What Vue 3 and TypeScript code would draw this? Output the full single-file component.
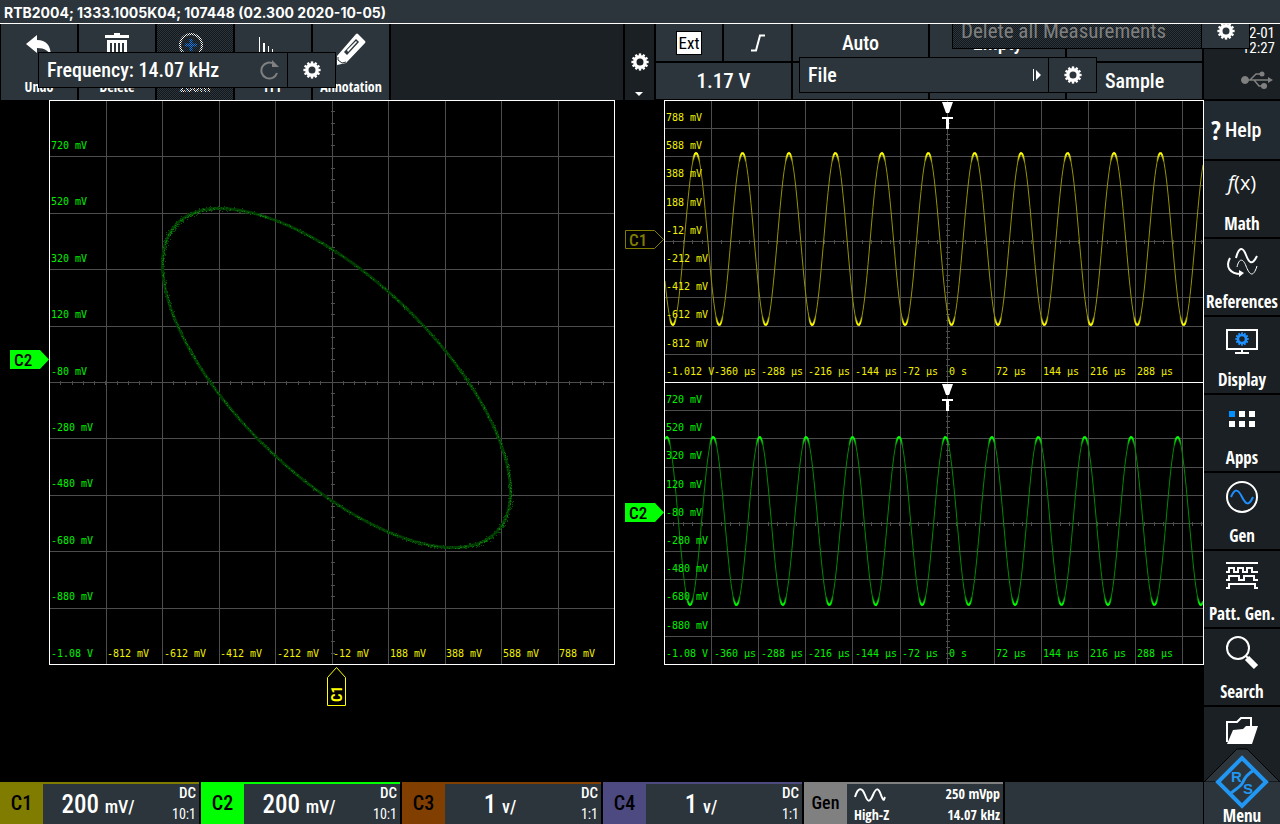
<script setup lang="ts">
interface Label { text: string; x: number; y: number }
interface Channel { id: string; value: string; unit: string; coupling: string; probe: string }

const channels: Channel[] = [
  { id: 'C1', value: '200', unit: 'mV/', coupling: 'DC', probe: '10:1' },
  { id: 'C2', value: '200', unit: 'mV/', coupling: 'DC', probe: '10:1' },
  { id: 'C3', value: '1', unit: 'v/', coupling: 'DC', probe: '1:1' },
  { id: 'C4', value: '1', unit: 'v/', coupling: 'DC', probe: '1:1' },
]

const tools = [
  { id: 'undo', label: 'Undo' },
  { id: 'trash', label: 'Delete' },
  { id: 'zoom', label: 'Zoom' },
  { id: 'fft', label: 'FFT' },
  { id: 'pencil', label: 'Annotation' },
]

const sideItems = [
  { id: 'math', label: 'Math' },
  { id: 'references', label: 'References' },
  { id: 'display', label: 'Display' },
  { id: 'apps', label: 'Apps' },
  { id: 'gen', label: 'Gen' },
  { id: 'pattern', label: 'Patt. Gen.' },
  { id: 'search', label: 'Search' },
]

const PERIOD = 46.44
const range = (n: number) => Array.from({ length: n }, (_, i) => i)

// Graticule lines of a plot, with fine ticks on both centre axes.
function gridPath(x0: number, y0: number, w: number, h: number, dx: number, dy: number, cx: number, cy: number) {
  let d = ''
  for (let x = x0 + dx; x < x0 + w - 4; x += dx) d += `M${Math.round(x)} ${y0}v${h}`
  for (let y = y0 + dy; y < y0 + h - 4; y += dy) d += `M${x0} ${Math.round(y)}h${w}`
  for (let x = x0 + dx / 5; x < x0 + w - 2; x += dx / 5) d += `M${Math.round(x)} ${cy - 2}v4`
  for (let y = y0 + dy / 5; y < y0 + h - 2; y += dy / 5) d += `M${cx - 2} ${Math.round(y)}h4`
  return d
}
const xyGrid = gridPath(49, 100, 565, 564, 56.5, 56.4, 332, 382)
const topGrid = gridPath(664, 100, 539, 282, 47.1, 28.2, 947, 241)
const lowGrid = gridPath(664, 382, 539, 282, 47.1, 28.2, 947, 523)

function wave(minimumX: number, mid: number, amp: number) {
  const pts: string[] = []
  for (let x = 665; x <= 1203; x += 1) {
    const y = mid + amp * Math.cos((2 * Math.PI * (x - minimumX)) / PERIOD)
    pts.push(`${x},${y.toFixed(1)}`)
  }
  return pts.join(' ')
}
const wave1 = wave(719.3, 239, 86)
const wave2 = wave(690, 521, 84)

const PHASE = Math.acos(0.67)
const orbit = (t: number, spread = 0): [number, number] => [
  336.5 + (174 + spread) * Math.cos(t),
  378 + (169.5 + spread) * Math.cos(t - PHASE),
]
const ellipse = range(361).map((i) => orbit((i * Math.PI) / 180).map((v) => v.toFixed(1)).join(',')).join(' ')

let seed = 7
const random = () => {
  seed = (seed * 16807) % 2147483647
  return seed / 2147483647
}
function speckle(count: number, spread: number) {
  return range(count).map(() => {
    const t = random() * Math.PI * 2
    const [x, y] = orbit(t, (random() + random() - 1) * spread)
    return `M${Math.round(x)} ${Math.round(y)}h1`
  }).join('')
}
const haze = speckle(1300, 3)
const sparks = speckle(350, 1)

const volts1 = ['788 mV', '588 mV', '388 mV', '188 mV', '-12 mV', '-212 mV', '-412 mV', '-612 mV', '-812 mV', '-1.012 V']
const volts2 = ['720 mV', '520 mV', '320 mV', '120 mV', '-80 mV', '-280 mV', '-480 mV', '-680 mV', '-880 mV', '-1.08 V']
const times = ['-360 µs', '-288 µs', '-216 µs', '-144 µs', '-72 µs', '0 s', '72 µs', '144 µs', '216 µs', '288 µs']
const column = (texts: string[], x: number, y: number, step: number): Label[] =>
  texts.map((text, i) => ({ text, x, y: Math.round(y + i * step) }))
const row = (texts: string[], x: number, y: number, step: number): Label[] =>
  texts.map((text, i) => ({ text, x: Math.round(x + i * step), y }))

const xyVolts = column(volts2, 51, 149, 56.4)
const xySweep = row([...volts1.slice(0, 9)].reverse(), 107, 657, 56.5)
const topVolts = column(volts1, 666, 121, 28.2)
const lowVolts = column(volts2, 666, 403, 28.2)
const topTimes = row(times, 714, 375, 47)
const lowTimes = row(times, 714, 657, 47)

const gearTeeth = range(12).map((i) => i * 30)
</script>

<template>
  <div class="device">
    <svg class="defs" aria-hidden="true">
      <symbol id="gear" viewBox="-9 -9 18 18">
        <circle r="5.2" fill="none" stroke="currentColor" stroke-width="3.4" />
        <rect v-for="a in gearTeeth" :key="a" x="-1.2" y="-8.6" width="2.4" height="3" fill="currentColor" :transform="`rotate(${a})`" />
      </symbol>
      <pattern id="dither" width="2" height="2" patternUnits="userSpaceOnUse">
        <path d="M0 0h1v1H0zM1 1h1v1H1z" fill="#12181b" shape-rendering="crispEdges" />
      </pattern>
    </svg>

    <header class="title">RTB2004; 1333.1005K04; 107448 (02.300 2020-10-05)</header>

    <div class="body">
      <main class="main">
        <div class="toolbar">
          <button v-for="t in tools" :key="t.id" class="tool">
            <svg v-if="t.id === 'undo'" viewBox="0 0 32 30" width="32" height="30"><path d="M3 11 14 2v5c9 0 14 5 14 17-2-6-6-9-14-9v5z" fill="#fff" /></svg>
            <svg v-else-if="t.id === 'trash'" viewBox="0 0 32 30" width="32" height="30"><path d="M4 2h9V0h6v2h9v3H4zM6 7h20v22H6z" fill="#fff" /><path d="M10 10v16M14 10v16M18 10v16M22 10v16" stroke="#2b353b" stroke-width="2" /></svg>
            <svg v-else-if="t.id === 'zoom'" viewBox="0 0 32 30" width="32" height="30"><circle cx="12" cy="12" r="11" fill="none" stroke="#fff" stroke-width="2" /><path d="M6 12h12M12 6v12" stroke="#0a84ff" stroke-width="3" /></svg>
            <svg v-else-if="t.id === 'fft'" viewBox="0 0 32 30" width="32" height="30"><path d="M2.500 4v24M6.500 10v18M7.500 10v18M11.500 13v15M15.500 16v12M19.500 20v8" stroke="#fff" stroke-width="1" /></svg>
            <svg v-else viewBox="0 0 32 32" width="32" height="32"><path d="M2 32V23L21 1q1-1 2 0l7 7q1 1 0 2L11 30z" fill="#fff" /><path d="M9 19 21 6l3 3-12 13z" fill="#2b353b" /><path d="M3 24v3l4 3 4-1" fill="none" stroke="#2b353b" stroke-width="1" /><path d="m12 17 9-9 1 1-9 10z" fill="#fff" /></svg>
            <span>{{ t.label }}</span>
            <svg v-if="t.id === 'zoom'" class="dither"><rect width="100%" height="100%" fill="url(#dither)" /></svg>
          </button>
          <div class="spare"></div>
          <button class="gearcol" aria-label="Toolbar settings">
            <svg width="18" height="18"><use href="#gear" /></svg>
            <svg class="caret" viewBox="0 0 8 4" width="8" height="4"><path d="M0 0h8L4 4z" fill="#fff" /></svg>
          </button>
          <div class="trigger">
            <button class="cell"><span class="ext">Ext</span></button>
            <button class="cell" aria-label="Rising edge"><svg viewBox="0 0 14 18" width="14" height="18"><path d="M0 16.500h5L9 1.500h5" fill="none" stroke="#fff" stroke-width="2" /></svg></button>
            <button class="cell">Auto</button>
            <button class="cell">Empty</button>
            <button class="cell"></button>
            <button class="cell wide">1.17 V</button>
            <button class="cell"></button>
            <button class="cell"></button>
            <button class="cell">Sample</button>
          </div>
        </div>

        <section class="plots">
          <svg class="xy" viewBox="0 100 615 607">
            <path :d="xyGrid" class="grid" />
            <polyline :points="ellipse" class="orbit" />
            <path :d="haze" class="haze" />
            <path :d="sparks" class="sparks" />
            <path d="M49.500 100.500h565v564h-565z" class="frame" />
            <text v-for="l in xyVolts" :key="l.text" :x="l.x" :y="l.y" class="scale green">{{ l.text }}</text>
            <text v-for="l in xySweep" :key="l.text" :x="l.x" :y="l.y" class="scale yellow">{{ l.text }}</text>
            <path d="M10 350h30l9 9.500-9 9.500H10z" fill="#00ff00" />
            <text x="14" y="366" class="tag" fill="#000">C2</text>
            <path d="M327.500 705.500v-28l9-10 9 10v28z" fill="none" stroke="#ffff00" />
            <text x="0" y="0" class="tag small" fill="#ffff00" transform="translate(342 702) rotate(-90)">C1</text>
          </svg>
          <svg class="yt" viewBox="615 100 589 607">
            <defs>
              <linearGradient id="yellowPeaks" gradientUnits="userSpaceOnUse" x1="0" x2="0" y1="152" y2="326">
                <stop offset="0" stop-color="#ff0" /><stop offset=".01" stop-color="#ff0" /><stop offset=".06" stop-color="#ff0" stop-opacity="0" />
                <stop offset=".94" stop-color="#ff0" stop-opacity="0" /><stop offset=".99" stop-color="#ff0" /><stop offset="1" stop-color="#ff0" />
              </linearGradient>
              <linearGradient id="greenPeaks" gradientUnits="userSpaceOnUse" x1="0" x2="0" y1="436" y2="606">
                <stop offset="0" stop-color="#0f0" /><stop offset=".01" stop-color="#0f0" /><stop offset=".06" stop-color="#0f0" stop-opacity="0" />
                <stop offset=".94" stop-color="#0f0" stop-opacity="0" /><stop offset=".99" stop-color="#0f0" /><stop offset="1" stop-color="#0f0" />
              </linearGradient>
            </defs>
            <path :d="topGrid" class="grid" />
            <path :d="lowGrid" class="grid" />
            <polyline :points="wave1" class="trace" stroke="#969200" />
            <polyline :points="wave1" class="peaks" stroke="url(#yellowPeaks)" />
            <polyline :points="wave2" class="trace" stroke="#008a00" />
            <polyline :points="wave2" class="peaks" stroke="url(#greenPeaks)" />
            <path d="M664.500 100.500h539v564h-539zM664 382.500h539" class="frame" />
            <text v-for="l in topVolts" :key="l.text" :x="l.x" :y="l.y" class="scale yellow">{{ l.text }}</text>
            <text v-for="l in topTimes" :key="l.text" :x="l.x" :y="l.y" class="scale yellow">{{ l.text }}</text>
            <text v-for="l in lowVolts" :key="l.text" :x="l.x" :y="l.y" class="scale green">{{ l.text }}</text>
            <text v-for="l in lowTimes" :key="l.text" :x="l.x" :y="l.y" class="scale green">{{ l.text }}</text>
            <g v-for="y in [102, 384]" :key="y" fill="#fff">
              <path :d="`M942 ${y}h11l-4 11h-3z`" />
              <path :d="`M942 ${y + 15}h11v2h-4v10h-3v-10h-4z`" />
            </g>
            <path d="M625.500 230.500h29l9 9-9 9h-29z" fill="none" stroke="#807c00" />
            <text x="629" y="246" class="tag" fill="#807c00">C1</text>
            <path d="M625 503h30l9 9.500-9 9.500h-30z" fill="#00ff00" />
            <text x="629" y="519" class="tag" fill="#000">C2</text>
          </svg>
        </section>

        <footer class="channels">
          <button v-for="c in channels" :key="c.id" class="channel" :class="c.id.toLowerCase()">
            <span class="name">{{ c.id }}</span>
            <span class="panel">
              <span class="value">{{ c.value }} <small>{{ c.unit }}</small></span>
              <span class="meta"><span>{{ c.coupling }}</span><span class="thin">{{ c.probe }}</span></span>
            </span>
          </button>
          <button class="channel generator">
            <span class="name">Gen</span>
            <span class="panel both">
              <span class="meta left">
                <svg viewBox="0 0 32 16" width="32" height="16"><path d="M1 10C4 0 8 0 11 8s5 7 8 0 5-8 8 0 3 4 4 2" fill="none" stroke="#fff" stroke-width="2" /></svg>
                <span>High-Z</span>
              </span>
              <span class="meta"><span>250 mVpp</span><span>14.07 kHz</span></span>
            </span>
          </button>
          <div class="rest"></div>
        </footer>
      </main>

      <aside class="side">
        <div class="status">
          <span>2020-12-01</span>
          <span>12:27</span>
          <svg viewBox="0 0 32 20" width="32" height="20"><g fill="#808080" stroke="#808080"><circle cx="4" cy="10" r="3.500" /><path d="M4 10h24M9 10l6-6h5M13 10l5 6h4" fill="none" stroke-width="1.500" /><circle cx="21" cy="4" r="2.500" stroke="none" /><circle cx="23" cy="16" r="3" stroke="none" /><path d="m27 7 5 3-5 3z" stroke="none" /></g></svg>
        </div>
        <button class="help"><b>?</b>Help</button>
        <button v-for="s in sideItems" :key="s.id" class="item">
          <span v-if="s.id === 'math'" class="fx"><i>f</i>(x)</span>
          <svg v-else viewBox="0 0 34 34" width="34" height="34" fill="none" stroke="#fff" stroke-width="2">
            <template v-if="s.id === 'references'">
              <path d="M11 12C14 0 18 1 21 9s6 11 11 1" /><path d="M12 21c2-9 6-9 9-1s7 13 11 0" stroke-width="1" /><path d="M5 12c-5 9 0 16 11 16" /><path d="m14 24 5 3-5 4z" fill="#fff" stroke="none" />
            </template>
            <template v-else-if="s.id === 'display'">
              <path d="M2 6h30v19H2zM10 29h14M17 25v4" /><svg x="10" y="8" width="14" height="14" color="#1e90ff" stroke="none"><use href="#gear" /></svg>
            </template>
            <template v-else-if="s.id === 'apps'">
              <g stroke="none" fill="#fff"><path d="M4 9h6v6H4z" fill="#0090ff" /><path d="M14 9h6v6h-6zM24 9h6v6h-6zM4 19h6v6H4zM14 19h6v6h-6zM24 19h6v6h-6z" /></g>
            </template>
            <template v-else-if="s.id === 'gen'">
              <circle cx="17" cy="17" r="15" /><path d="M6 17C10 8 13 9 17 17s7 9 11 0" stroke="#1e90ff" />
            </template>
            <template v-else-if="s.id === 'pattern'">
              <path d="M1 5h32M1 14h3v-4h5v4h4v-4h5v4h4v-4h5v4h6M1 22h3v-4h10v4h5v-4h10v4h4M1 30h3v-4h26v4h3" />
            </template>
            <template v-else>
              <circle cx="13" cy="12" r="11" /><path d="m21 20 3 3" /><path d="m22 22 9 9" stroke-width="6" />
            </template>
          </svg>
          <span>{{ s.label }}</span>
        </button>
        <button class="item file" aria-label="File">
          <svg viewBox="0 0 34 30" width="34" height="30"><path d="M2 26V6h10l4-4h10v8" fill="none" stroke="#fff" stroke-width="2" /><path d="M2 28 8 14l10-1 3-3h12l-6 18z" fill="#fff" /></svg>
        </button>
        <button class="menu">
          <svg class="roof" viewBox="0 0 76 34" preserveAspectRatio="none"><path d="M0 34 33 1h10l33 33z" fill="#2b353b" stroke="#000" /></svg>
          <svg class="logo" viewBox="-27 -27 54 54" width="54" height="54">
            <path d="M0-24 24 0 0 24-24 0z" fill="#2b353b" stroke="#2196f3" stroke-width="4" />
            <path d="M12-12C5-7 3-5 1 0S-7 7-12 12" fill="none" stroke="#2196f3" stroke-width="3" />
            <text x="-11" y="0" class="rs">R</text><text x="1" y="12" class="rs">S</text>
          </svg>
          <span>Menu</span>
        </button>
      </aside>

      <div class="popup frequency">
        <button class="action">Frequency: 14.07 kHz
          <svg viewBox="0 0 20 20" width="20" height="20"><path d="M17 13A8 8 0 1 1 14 4" fill="none" stroke="#808080" stroke-width="2" /><path d="M12 0v7h7z" fill="#808080" /></svg>
        </button>
        <button class="gearbtn" aria-label="Frequency settings"><svg width="18" height="18"><use href="#gear" /></svg></button>
      </div>
      <div class="popup files">
        <button class="action">File
          <svg viewBox="0 0 8 12" width="8" height="12"><path d="M0 0h1v12H0zM3 1l5 5-5 5z" fill="#fff" /></svg>
        </button>
        <button class="gearbtn" aria-label="File settings"><svg width="18" height="18"><use href="#gear" /></svg></button>
      </div>
      <div class="popup measurements">
        <button class="action" disabled>
          <svg class="dither"><rect width="100%" height="100%" fill="url(#dither)" /></svg>
          <span>Delete all Measurements</span>
        </button>
        <button class="gearbtn" aria-label="Measurement settings"><svg width="18" height="18"><use href="#gear" /></svg></button>
      </div>
    </div>
  </div>
</template>

<style>
body { margin: 0; background: #000; }
</style>

<style scoped>
.device {
  min-height: 100vh;
  display: flex;
  flex-direction: column;
  background: #000;
  color: #fff;
  font-family: "Roboto Condensed", "Liberation Sans Narrow", "Liberation Sans", sans-serif;
  font-size: 20px;
  font-weight: 500;
  line-height: 20px;
}
.defs { position: absolute; width: 0; height: 0; }
button {
  margin: 0; padding: 0; border: 0; color: inherit; font: inherit; background: #2b353b;
}
.title {
  box-sizing: border-box;
  height: 24px;
  padding: 3px 4px 0;
  border-bottom: 1px solid #fff;
  background: #2b353b;
  font: bold 14px/20px Inter, "Liberation Sans", sans-serif;
}
.body { position: relative; flex: 1; display: flex; overflow: hidden; }
.main { flex: 1; min-width: 0; display: flex; flex-direction: column; }

.toolbar { display: flex; height: 76px; padding-left: 1px; box-sizing: border-box; }
.tool, .item, .menu, .generator .meta, .help b {
  font-family: "Open Sans Condensed", "Roboto Condensed", "Liberation Sans", sans-serif;
  font-weight: bold;
}
.tool {
  position: relative;
  box-sizing: border-box; width: 78px; border-right: 2px solid #000;
  display: flex; flex-direction: column; align-items: center; justify-content: space-between;
  padding: 9px 0 3px; font-size: 14px; white-space: nowrap;
}
.dither { position: absolute; left: 0; top: 0; width: 100%; height: 100%; }
.spare { flex: 1; background: #1a2023; }
.gearcol {
  position: relative; box-sizing: border-box; width: 33px; border: solid #000; border-width: 0 2px;
  background: #1a2023; display: flex; align-items: center; justify-content: center;
}
.caret { position: absolute; bottom: 4px; left: 10px; }
.trigger {
  width: 548px; display: grid; grid-template-columns: 66fr 67fr 135fr 135fr 135fr;
  grid-template-rows: 37px 36px; gap: 2px; padding: 0 2px 1px 0; box-sizing: border-box;
}
.cell { display: flex; align-items: center; justify-content: center; min-width: 0; }
.wide { grid-column: span 2; font-size: 21px; }
.ext { background: #fff; color: #000; border: 1px solid #000; font-size: 17px; line-height: 22px; padding: 0 2px; font-weight: 400; }

.plots { display: flex; align-items: flex-start; }
.xy { flex: 615 1 0; min-width: 0; display: block; }
.yt { flex: 589 1 0; min-width: 0; display: block; }
.grid { fill: none; stroke: #4d4d4d; transform: translate(0.5px, 0.5px); shape-rendering: crispEdges; }
.frame { fill: none; stroke: #fff; shape-rendering: crispEdges; }
.trace { fill: none; stroke-width: 1; }
.peaks { fill: none; stroke-width: 2; }
.orbit { fill: none; stroke: #003600; stroke-width: 3; }
.haze { stroke: #005200; shape-rendering: crispEdges; }
.sparks { stroke: #0f780f; shape-rendering: crispEdges; }
.scale { font: 10px "DejaVu Sans Mono", monospace; }
.green { fill: #00f000; }
.yellow { fill: #f0f000; }
.tag { font-size: 17px; }
.small { font-size: 15px; font-weight: bold; }

.channels {
  margin-top: auto; display: grid; grid-template-columns: repeat(5, 199fr) 198fr; gap: 2px;
  height: 42px; padding-right: 1px;
}
.channel { display: flex; align-items: stretch; border-top: 2px solid var(--c); background: var(--c); min-width: 0; text-align: left; }
.c1 { --c: #807c00; }
.c2 { --c: #00ff00; }
.c3 { --c: #803f00; }
.c4 { --c: #4c4a80; }
.generator { --c: #808080; }
.name { width: 43px; color: #000; line-height: 38px; text-align: center; }
.generator .name { font-size: 18px; }
.panel { flex: 1; display: flex; justify-content: space-between; background: #2b353b; padding-right: 3px; }
.value { width: 110px; text-align: center; font-size: 25px; line-height: 42px; height: 40px; white-space: nowrap; }
.value small { font-size: 18px; }
.meta { display: flex; flex-direction: column; justify-content: center; gap: 2px; text-align: right; font-size: 15px; line-height: 19px; }
.thin { font-size: 14px; font-weight: 400; }
.both { padding-left: 7px; }
.left { text-align: left; }
.left svg { margin-top: 2px; }
.generator .meta { font-size: 14px; }
.rest { background: #2b353b; }

.side { width: 76px; display: flex; flex-direction: column; }
.status {
  height: 75px; box-sizing: border-box; background: #1a2023; padding: 2px 5px 0; font-size: 15px; line-height: 15px;
  display: flex; flex-direction: column; align-items: flex-end; white-space: nowrap; font-weight: 400;
}
.status svg { margin: 14px 2px 0 0; flex: none; }
.help {
  height: 60px; border-top: 2px solid #000; box-sizing: border-box; background: #222a31; padding: 0 7px;
  display: flex; align-items: center; gap: 4px; white-space: nowrap;
}
.help b { font-size: 26px; }
.item {
  height: 78px; box-sizing: border-box; border-top: 2px solid #000; background: #1a2023; font-size: 17px;
  display: flex; flex-direction: column; align-items: center; justify-content: space-between; padding: 7px 0 3px; white-space: nowrap;
}
.fx { font: 20px/30px "Open Sans", sans-serif; }
.file { height: 77px; padding-top: 9px; }
.menu {
  position: relative; flex: 1; display: flex; flex-direction: column; justify-content: flex-end; align-items: center;
  font-size: 17px; line-height: 17px;
}
.menu span { position: relative; }
.roof { position: absolute; left: 0; width: 100%; height: 34px; bottom: 100%; }
.logo { position: absolute; bottom: 15px; left: 50%; margin-left: -27px; }
.rs { font: bold 15px "Liberation Sans", sans-serif; fill: #2196f3; }

.popup { position: absolute; display: flex; height: 36px; box-sizing: border-box; border: 1px solid #000; width: 298px; }
.action { position: relative; flex: 1; display: flex; align-items: center; justify-content: space-between; padding: 0 7px 0 8px; white-space: nowrap; }
.gearbtn { width: 48px; border-left: 1px solid #000; display: flex; align-items: center; justify-content: center; }
.frequency { left: 38px; top: 28px; }
.files { right: 183px; top: 33px; }
.measurements { right: 30px; top: -11px; }
.action:disabled { color: #808080; font-size: 21px; font-weight: 400; }
.action span { position: relative; }
</style>
